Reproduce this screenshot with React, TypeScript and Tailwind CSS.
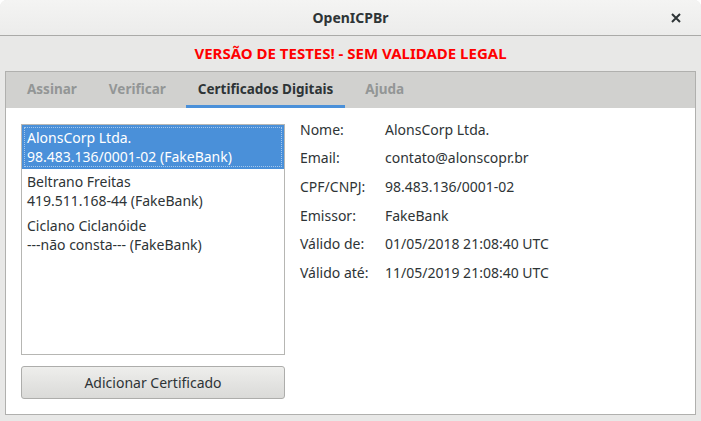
const certs = [
  { name: "AlonsCorp Ltda.", id: "98.483.136/0001-02 (FakeBank)" },
  { name: "Beltrano Freitas", id: "419.511.168-44 (FakeBank)" },
  { name: "Ciclano Ciclanóide", id: "---não consta--- (FakeBank)" },
];

const details = [
  ["Nome:", "AlonsCorp Ltda."],
  ["Email:", "contato@alonscopr.br"],
  ["CPF/CNPJ:", "98.483.136/0001-02"],
  ["Emissor:", "FakeBank"],
  ["Válido de:", "01/05/2018 21:08:40 UTC"],
  ["Válido até:", "11/05/2019 21:08:40 UTC"],
];

const tabs = ["Assinar", "Verificar", "Certificados Digitais", "Ajuda"];

export default function App() {
  return (
    <div className="w-[701px] h-[421px] flex flex-col bg-[#e8e8e7] text-[#2e3436] font-['Noto_Sans',sans-serif] text-[14px] overflow-hidden rounded-t-[7px]">
      {/* title bar */}
      <div className="h-[36px] shrink-0 grid grid-cols-[1fr_auto_1fr] items-center bg-gradient-to-b from-[#f4f4f3] to-[#ececeb] border-b border-[#aaaaa8]">
        <div />
        <div className="font-bold text-[14px]">OpenICPBr</div>
        <div className="flex justify-end pr-[20px]">
          <svg width="10" height="10" viewBox="0 0 10 10">
            <path d="M1 1L9 9M9 1L1 9" stroke="#2e3436" strokeWidth="2" />
          </svg>
        </div>
      </div>

      {/* warning */}
      <div className="h-[35px] shrink-0 flex items-center justify-center text-[#ff0000] font-bold text-[15px]">
        VERSÃO DE TESTES! - SEM VALIDADE LEGAL
      </div>

      {/* notebook */}
      <div className="mx-[5px] mb-[6px] flex-1 flex flex-col border border-[#b0b0ae]">
        <div className="h-[36px] shrink-0 flex items-stretch gap-[8px] pl-[9px] bg-[#d1d1cf]">
          {tabs.map((t, i) => (
            <div
              key={t}
              className={
                "flex items-center px-[12px] pt-[2px] font-bold text-[13.5px] border-b-[3px] " +
                (i === 2 ? "text-[#2e3436] border-[#4a90d9]" : "text-[#939696] border-transparent")
              }
            >
              {t}
            </div>
          ))}
        </div>

        <div className="flex-1 bg-white flex gap-[15px] pl-[15px] pt-[16px] pb-[15px]">
          <div className="w-[264px] flex flex-col gap-[11px]">
            <div className="flex-1 border border-[#b6b6b3] leading-[19px]">
              {certs.map((c, i) => (
                <div
                  key={c.name}
                  className={
                    "h-[44px] px-[5px] py-[3px] " +
                    (i === 0 ? "bg-[#4a90d9] text-white outline-1 outline-dotted outline-white/50 outline-offset-[-3px]" : "")
                  }
                >
                  <div>{c.name}</div>
                  <div>{c.id}</div>
                </div>
              ))}
            </div>
            <button className="h-[33px] rounded-[3px] border border-[#adadab] bg-gradient-to-b from-[#eeeeec] to-[#dadad8] text-[#2e3436]">
              Adicionar Certificado
            </button>
          </div>

          <div className="flex flex-col gap-[8.7px] -mt-[5px]">
            {details.map(([k, v]) => (
              <div key={k} className="h-[20px] flex items-center">
                <span className="w-[85px]">{k}</span>
                <span>{v}</span>
              </div>
            ))}
          </div>
        </div>
      </div>
    </div>
  );
}
